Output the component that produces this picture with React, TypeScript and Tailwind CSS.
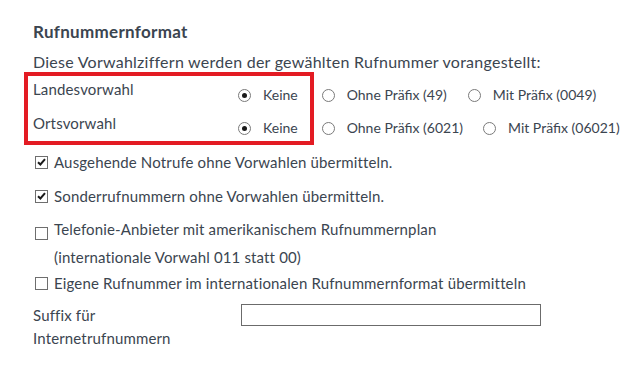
import React from 'react';

const Radio = ({ checked }: { checked?: boolean }) => (
  <span className="inline-flex h-[13px] w-[13px] shrink-0 items-center justify-center rounded-full border border-[#7a7a7a] bg-white">
    {checked && <span className="h-[5px] w-[5px] rounded-full bg-[#1a1a1a]" />}
  </span>
);

const Checkbox = ({ checked }: { checked?: boolean }) => (
  <span className="inline-flex h-[13px] w-[13px] shrink-0 items-center justify-center border border-[#6e6e6e] bg-white">
    {checked && (
      <svg width="9" height="8" viewBox="0 0 9 8">
        <path d="M1 4.2 L3.4 6.5 L8 1.2" fill="none" stroke="#1a1a1a" strokeWidth="2" />
      </svg>
    )}
  </span>
);

const Option = ({ label, checked, className = '' }: { label: string; checked?: boolean; className?: string }) => (
  <label className={`flex shrink-0 items-center gap-[12px] whitespace-nowrap text-[14px] leading-[20px] tracking-normal ${className}`}>
    <Radio checked={checked} />
    <span>{label}</span>
  </label>
);

const CheckRow = ({ label, checked }: { label: string; checked?: boolean }) => (
  <label className="flex items-center gap-[6px] whitespace-nowrap pl-[2px] leading-[20px]">
    <Checkbox checked={checked} />
    <span>{label}</span>
  </label>
);

export default function App() {
  return (
    <div className="h-[367px] w-[641px] overflow-hidden bg-white pl-[33px] pt-[22px] text-[15px] tracking-[0.15px] text-[#3b4550] [font-family:Lato,'Noto_Sans',sans-serif]">
      <h2 className="text-[17px] font-bold leading-[20px] tracking-[0.3px]">Rufnummernformat</h2>
      <p className="mt-[10px] text-[16px] leading-[20px] tracking-[0.25px]">
        Diese Vorwahlziffern werden der gewählten Rufnummer vorangestellt:
      </p>

      <div className="relative pt-[4px]">
        <div className="pointer-events-none absolute left-[-9px] top-0 h-[73px] w-[290px] border-4 border-[#e31b23]" />

        <div className="flex h-[34px]">
          <div className="w-[205px] shrink-0 pt-[3px] leading-[20px]">Landesvorwahl</div>
          <div className="flex items-center gap-[21px] self-start pt-[9px]">
            <Option label="Keine" checked className="mr-[3px]" />
            <Option label="Ohne Präfix (49)" />
            <Option label="Mit Präfix (0049)" />
          </div>
        </div>
        <div className="flex h-[34px]">
          <div className="w-[205px] shrink-0 pt-[3px] leading-[20px]">Ortsvorwahl</div>
          <div className="flex items-center gap-[20px] self-start pt-[8px]">
            <Option label="Keine" checked className="mr-[4px]" />
            <Option label="Ohne Präfix (6021)" />
            <Option label="Mit Präfix (06021)" />
          </div>
        </div>
      </div>

      <div className="mt-[8px]">
        <CheckRow label="Ausgehende Notrufe ohne Vorwahlen übermitteln." checked />
      </div>
      <div className="mt-[14px]">
        <CheckRow label="Sonderrufnummern ohne Vorwahlen übermitteln." checked />
      </div>
      <div className="mt-[9px] flex items-start gap-[6px] pl-[2px]">
        <span className="mt-[8px]">
          <Checkbox />
        </span>
        <div className="whitespace-nowrap leading-[28px]">
          Telefonie-Anbieter mit amerikanischem Rufnummernplan
          <br />
          (internationale Vorwahl 011 statt 00)
        </div>
      </div>
      <div className="mt-[2px]">
        <CheckRow label="Eigene Rufnummer im internationalen Rufnummernformat übermitteln" />
      </div>

      <div className="mt-[11px] flex">
        <div className="w-[208px] shrink-0 leading-[23px]">
          Suffix für
          <br />
          Internetrufnummern
        </div>
        <input type="text" className="h-[22px] w-[300px] border border-[#6b6b6b] bg-white px-1 outline-none" />
      </div>
    </div>
  );
}
